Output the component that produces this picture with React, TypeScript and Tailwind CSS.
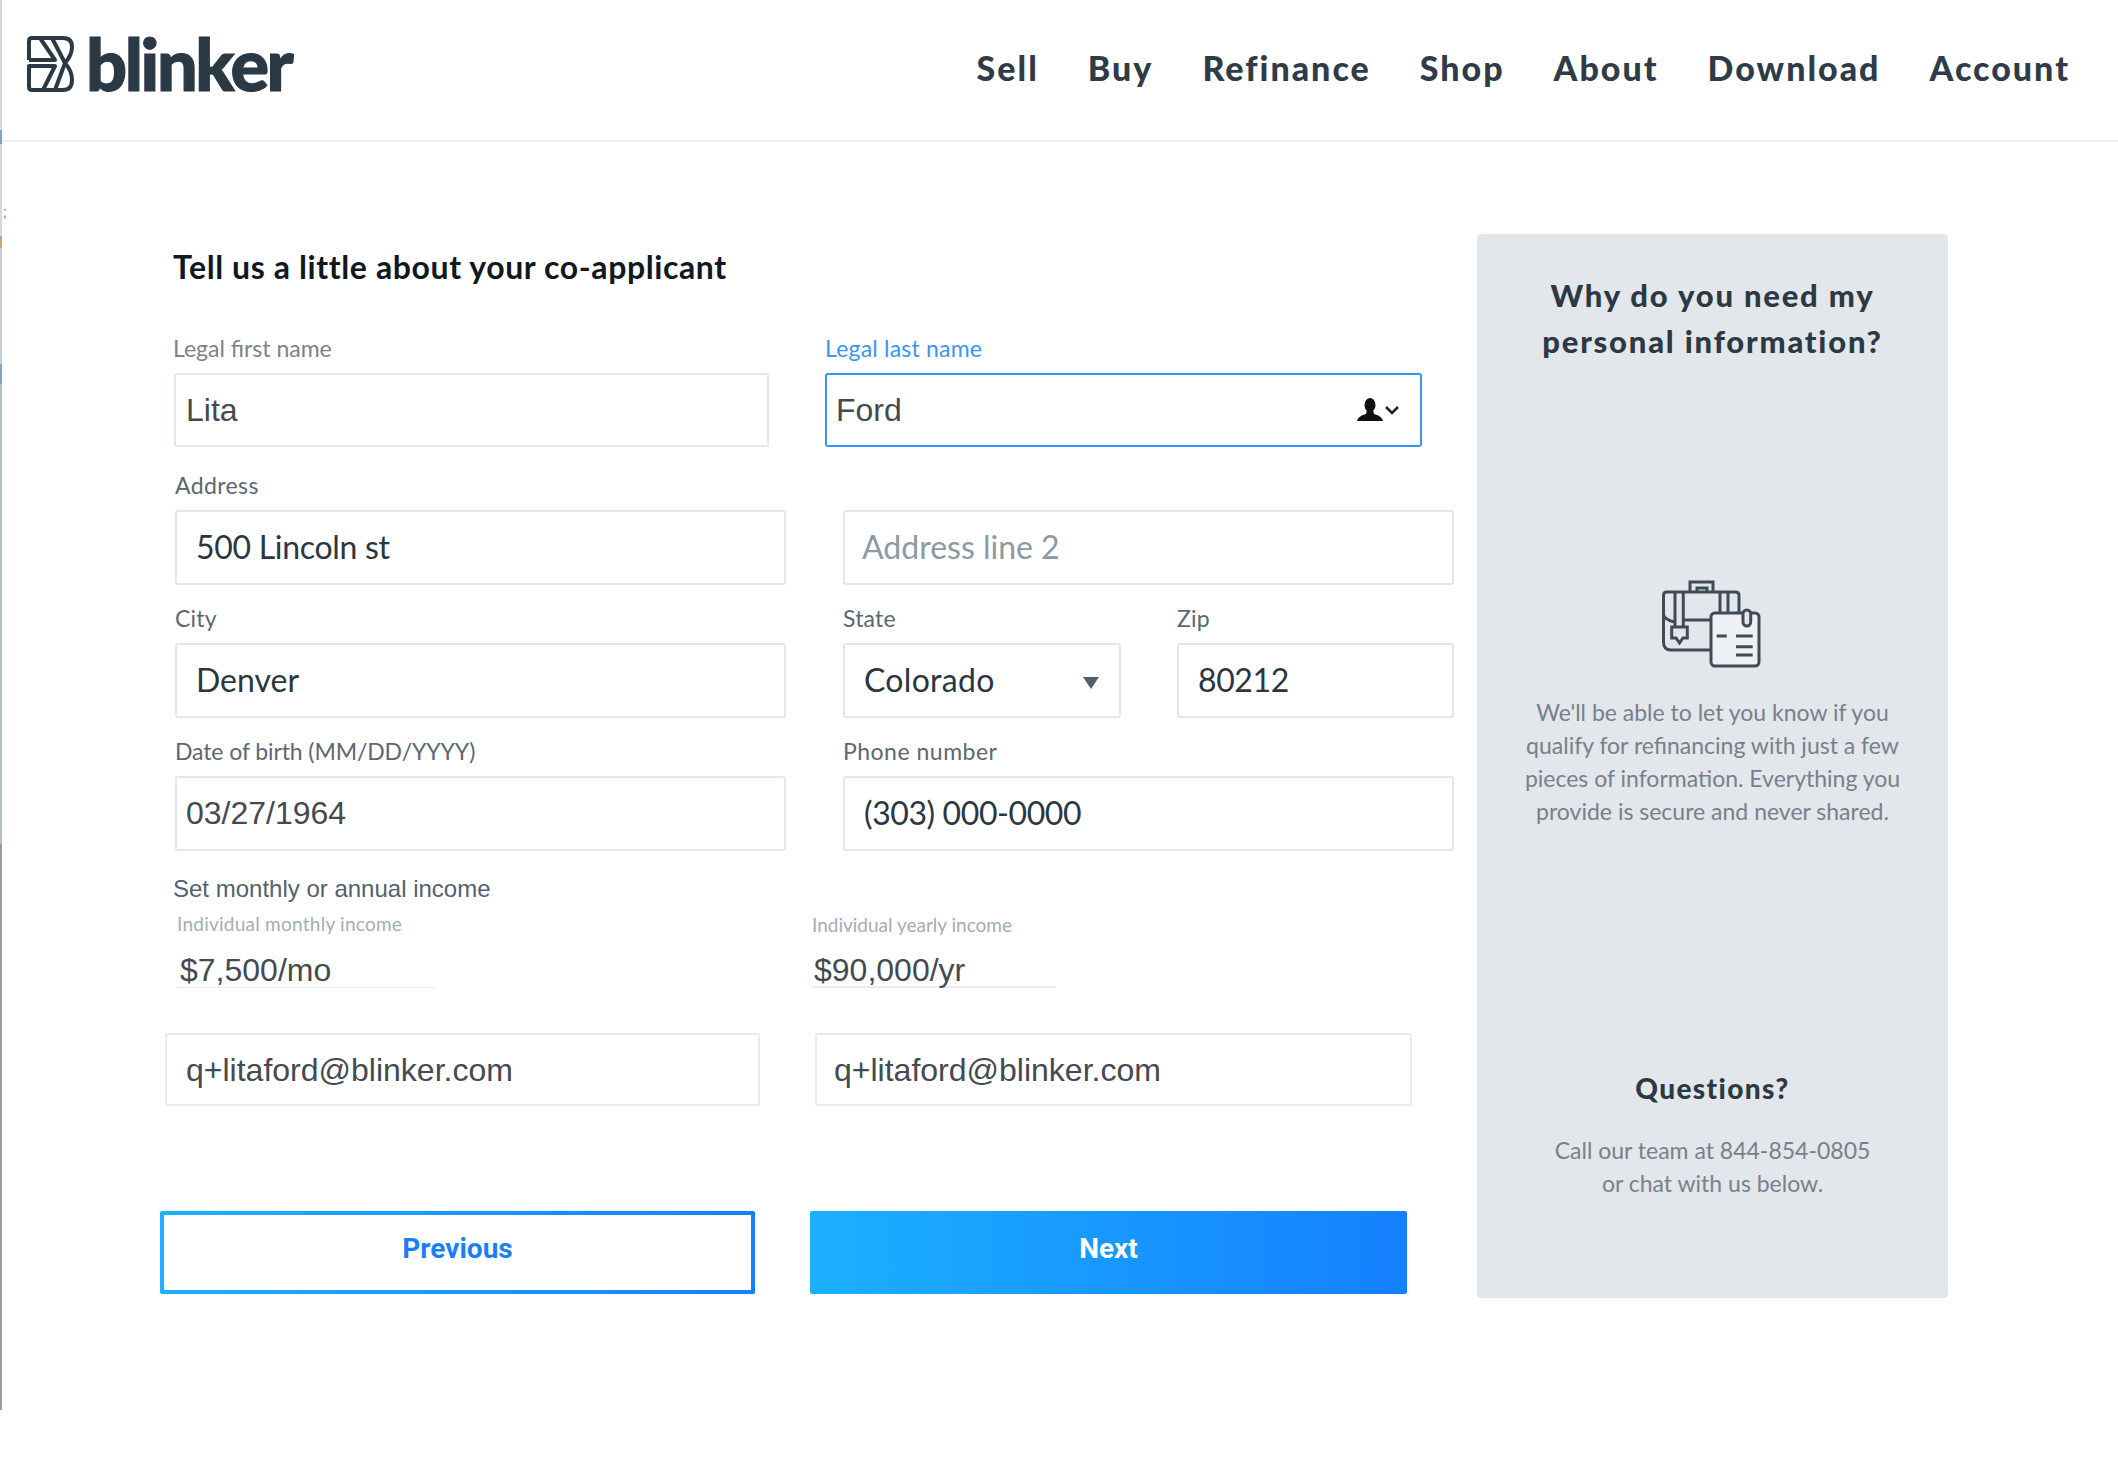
import React from "react";

const lato = "font-['Lato','Liberation_Sans',sans-serif]";
const arial = "font-['Liberation_Sans',Arial,sans-serif]";

function Logo() {
  return (
    <div className="flex items-start">
      <svg width="47" height="57" viewBox="0 0 47 57" fill="none" stroke="#2b3944" strokeWidth="4" strokeLinejoin="round" className="mt-[35px] ml-[27px]">
        <path d="M2 25V6Q2 3 5 3H36Q45 3 45 12Q45 20 38 28Q45 36 45 45Q45 55 36 55H5Q2 55 2 52V31H28L16 55" />
        <path d="M2 25H28L13 3" />
        <path d="M25 3L38 28L28 55" />
      </svg>
      <span className={`${lato} font-black text-[#2b3944] text-[72px] leading-[70px] tracking-[-2.4px] ml-[12px] mt-[28px] [-webkit-text-stroke:1.2px_#2b3944]`}>blinker</span>
    </div>
  );
}

function Nav() {
  const items = ["Sell", "Buy", "Refinance", "Shop", "About", "Download", "Account"];
  return (
    <nav className={`${lato} flex gap-[49px] mr-[48px] mt-[46px] text-[34px] leading-[44px] font-black tracking-[2px] text-[#2f3c48]`}>
      {items.map((t) => (
        <span key={t}>{t}</span>
      ))}
    </nav>
  );
}

function Field({
  label,
  value,
  width,
  height = "h-[75px]",
  valueClass,
  labelClass = "tracking-[0.2px]",
  muted,
  active,
  children,
  className = "",
}: {
  label?: string;
  value: string;
  width: string;
  height?: string;
  valueClass: string;
  labelClass?: string;
  muted?: boolean;
  active?: boolean;
  children?: React.ReactNode;
  className?: string;
}) {
  return (
    <div className={`${width} ${className} flex flex-col`}>
      {label && (
        <div
          className={`${lato} ${labelClass} h-[38px] text-[23px] leading-[26px] ${
            active ? "text-[#3b94f7]" : muted ? "text-[#7a838c]" : "text-[#5c6773]"
          }`}
        >
          {label}
        </div>
      )}
      <div
        className={`flex items-center justify-between ${height} rounded-[3px] bg-white ${
          active ? "border-2 border-[#3b94f7]" : "border-2 border-[#e3e6ea]"
        }`}
      >
        <span className={valueClass}>{value}</span>
        {children}
      </div>
    </div>
  );
}

const arialValue = `${arial} text-[32px] pb-[1px] text-[#444a50]`;
const latoValue = `${lato} text-[32px] pb-[2px] text-[#2a3640]`;

function Briefcase() {
  return (
    <svg width="102" height="92" viewBox="0 0 102 92" fill="none" stroke="#3f4c58" strokeWidth="3" className="-ml-[3px]">
      <path d="M51 72H11Q3.5 72 3.5 64V17Q3.5 14 7 14H75Q79 14 79 17V35" />
      <path d="M3.5 37Q5 42 15 44M23 42H51" />
      <path d="M30 14V4H53V14M37 14V10H47V14" />
      <path d="M15 14V49M23.3 14V49M60 14V35M68 14V35" />
      <path d="M11.7 49H27.3V60H23L19.5 65L16 60H11.7Z" />
      <rect x="51" y="35" width="48" height="53" rx="4" fill="#eef0f3" />
      <path d="M56.7 58H66.7M76 58H92.7M76 68.7H92.7M76 77H92.7" />
      <rect x="83" y="32" width="7.7" height="16" rx="3.8" fill="#e3e6ea" />
    </svg>
  );
}

function SidePanel() {
  return (
    <aside className="w-[471px] h-[1064px] bg-[#e3e6ea] rounded-[4px] flex flex-col items-center">
      <h2 className={`${lato} font-black text-[31px] leading-[46px] tracking-[1.8px] text-[#2b3944] text-center mt-[38px]`}>
        Why do you need my
        <br />
        personal information?
      </h2>
      <div className="mt-[214px]">
        <Briefcase />
      </div>
      <p className={`${lato} text-[23px] leading-[33px] text-[#76818d] text-center mt-[26px] whitespace-nowrap`}>
        We'll be able to let you know if you
        <br />
        qualify for refinancing with just a few
        <br />
        pieces of information. Everything you
        <br />
        provide is secure and never shared.
      </p>
      <h3 className={`${lato} font-black text-[28px] leading-[34px] tracking-[1.4px] text-[#2b3944] mt-[243px]`}>Questions?</h3>
      <p className={`${lato} text-[23px] leading-[33px] text-[#76818d] text-center mt-[29px]`}>
        Call our team at 844-854-0805
        <br />
        or chat with us below.
      </p>
    </aside>
  );
}

function Email({ width, pad }: { width: string; pad: string }) {
  return (
    <div className={`${arial} ${width} ${pad} h-[73px] flex items-center border-2 border-[#e9ebef] rounded-[2px] text-[32px] text-[#444a50]`}>
      q+litaford@blinker.com
    </div>
  );
}

function PageEdge() {
  return (
    <div className="absolute left-0 top-0 w-[2px] h-[1410px] flex flex-col">
      <div className="h-[130px] bg-[#d6d8da]" />
      <div className="h-[14px] bg-[#7fa5bd]" />
      <div className="h-[92px] bg-[#d6d8da]" />
      <div className="h-[12px] bg-[#c9a488]" />
      <div className="h-[116px] bg-[#c9ced3]" />
      <div className="h-[20px] bg-[#7fa5bd]" />
      <div className="h-[460px] bg-[#b4c0c9]" />
      <div className="flex-1 bg-[#9a9da0]" />
      <span className={`${arial} absolute left-[3px] top-[204px] text-[14px] leading-[16px] text-[#777]`}>;</span>
    </div>
  );
}

export default function App() {
  return (
    <div className="relative w-[2118px] h-[1480px] bg-white overflow-hidden">
      <PageEdge />
      <header className="flex justify-between items-start h-[142px] border-b-2 border-[#eef1f3]">
        <Logo />
        <Nav />
      </header>
      <main className="flex items-start pl-[160px] pt-[92px]">
        <div className="w-[1317px] flex flex-col">
          <h1 className={`${lato} font-bold text-[32px] leading-[40px] tracking-[0.6px] text-[#11181f] ml-[13px] mt-[13px]`}>
            Tell us a little about your co-applicant
          </h1>
          <div className="flex mt-[48px] ml-[14px] gap-[56px]">
            <Field label="Legal first name" value="Lita" width="w-[595px]" height="h-[74px]" muted labelClass="-ml-px" valueClass={`${arialValue} pl-[10px]`} />
            <Field label="Legal last name" value="Ford" width="w-[597px]" height="h-[74px]" active valueClass={`${arialValue} pl-[9px]`}>
              <span className="flex items-center mr-[20px]">
                <svg width="26" height="24" viewBox="0 0 26 24" fill="#111">
                  <ellipse cx="13" cy="7" rx="5.5" ry="7" />
                  <path d="M10 12h6l1 4c4 1 8 3 9 7H0c1-4 5-6 9-7z" />
                </svg>
                <svg width="16" height="11" viewBox="0 0 16 11" fill="none" stroke="#222" strokeWidth="2.6" className="ml-[1px]">
                  <path d="M2 2l6 6 6-6" />
                </svg>
              </span>
            </Field>
          </div>
          <div className="flex mt-[25px] ml-[15px] gap-[57px]">
            <Field label="Address" value="500 Lincoln st" width="w-[611px]" labelClass="tracking-[0.4px]" valueClass={`${latoValue} pl-[19px] tracking-[-0.3px]`} />
            <Field value="Address line 2" width="w-[611px]" className="mt-[38px]" valueClass={`${lato} text-[32px] pb-[2px] pl-[17px] text-[#8d99a5]`} />
          </div>
          <div className="flex mt-[20px] ml-[15px] gap-[57px]">
            <Field label="City" value="Denver" width="w-[611px]" valueClass={`${latoValue} pl-[19px]`} />
            <Field label="State" value="Colorado" width="w-[278px]" valueClass={`${latoValue} pl-[19px] tracking-[0.3px]`}>
              <svg width="16" height="12" viewBox="0 0 16 12" fill="#51606e" className="mr-[20px] mt-[4px]">
                <path d="M0 0h16L8 12z" />
              </svg>
            </Field>
            <Field label="Zip" value="80212" width="w-[277px]" className="-ml-px" valueClass={`${latoValue} pl-[19px] tracking-[-0.4px]`} />
          </div>
          <div className="flex mt-[20px] ml-[15px] gap-[57px]">
            <Field label="Date of birth (MM/DD/YYYY)" value="03/27/1964" width="w-[611px]" labelClass="tracking-[-0.1px]" valueClass={`${arialValue} pl-[9px]`} />
            <Field label="Phone number" value="(303) 000-0000" width="w-[611px]" labelClass="tracking-[0.5px]" valueClass={`${latoValue} pl-[19px] tracking-[-0.4px]`} />
          </div>
          <div className={`${arial} text-[24px] leading-[26px] text-[#56606e] ml-[13px] mt-[25px]`}>Set monthly or annual income</div>
          <div className="flex items-start mt-[9px]">
            <div className="ml-[17px] w-[258px]">
              <div className={`${lato} text-[19px] leading-[26px] tracking-[0.25px] text-[#a3adb8] whitespace-nowrap`}>Individual monthly income</div>
              <div className={`${arial} h-[51px] pt-[15px] pl-[3px] border-b border-[#e9ebef] text-[32px] leading-[36px] text-[#444a50] whitespace-nowrap`}>$7,500/mo</div>
            </div>
            <div className="ml-[377px] w-[244px] mt-[1px]">
              <div className={`${lato} text-[19px] leading-[26px] text-[#a3adb8] whitespace-nowrap`}>Individual yearly income</div>
              <div className={`${arial} h-[50px] pt-[14px] pl-[2px] border-b-2 border-[#e9ebef] text-[32px] leading-[36px] text-[#444a50] whitespace-nowrap`}>$90,000/yr</div>
            </div>
          </div>
          <div className="flex mt-[45px] ml-[5px] gap-[55px]">
            <Email width="w-[595px]" pad="pl-[19px]" />
            <Email width="w-[597px]" pad="pl-[17px]" />
          </div>
          <div className="flex mt-[105px] gap-[55px]">
            <button className="w-[595px] h-[83px] rounded-[2px] p-[4px] bg-[linear-gradient(90deg,#1cb0ff,#1580ff)]">
              <span className="font-['Roboto',sans-serif] font-bold text-[#1b7ff5] text-[28px] flex items-center justify-center w-full h-full bg-white pb-[8px]">Previous</span>
            </button>
            <button className="w-[597px] h-[83px] rounded-[2px] bg-[linear-gradient(90deg,#1cb0ff,#1580ff)] font-['Roboto',sans-serif] font-bold text-white text-[28px] pb-[8px]">
              Next
            </button>
          </div>
        </div>
        <SidePanel />
      </main>
    </div>
  );
}
